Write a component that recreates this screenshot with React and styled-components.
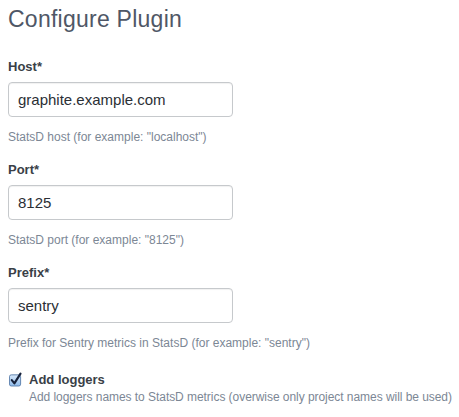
import React, { useState } from 'react';
import styled, { createGlobalStyle } from 'styled-components';

const GlobalStyle = createGlobalStyle`
  body {
    margin: 0;
    background: #ffffff;
    font-family: 'Liberation Sans', Arial, sans-serif;
  }
`;

const fields = [
  { id: 'host', label: 'Host*', value: 'graphite.example.com', help: 'StatsD host (for example: "localhost")' },
  { id: 'port', label: 'Port*', value: '8125', help: 'StatsD port (for example: "8125")' },
  { id: 'prefix', label: 'Prefix*', value: 'sentry', help: 'Prefix for Sentry metrics in StatsD (for example: "sentry")' },
];

const CheckIcon = () => (
  <svg width="14" height="15" viewBox="0 0 14 15">
    <defs>
      <linearGradient id="cb" x1="0" y1="0" x2="0" y2="1">
        <stop offset="0" stopColor="#d9e9fb" />
        <stop offset="1" stopColor="#8fbcec" />
      </linearGradient>
    </defs>
    <rect x="0.5" y="2.5" width="12" height="12" rx="2" fill="url(#cb)" stroke="#5a7dab" />
    <path d="M3 8.2 L5.8 11.6 L12.4 1.2" fill="none" stroke="#17223b" strokeWidth="2.3" strokeLinecap="round" strokeLinejoin="round" />
  </svg>
);

const App = () => {
  const [values, setValues] = useState(
    fields.reduce((acc, f) => ({ ...acc, [f.id]: f.value }), {})
  );
  const [addLoggers, setAddLoggers] = useState(true);

  const onChange = (e) => {
    setValues(prev => ({ ...prev, [e.target.id]: e.target.value }));
  };

  return (
    <Page>
      <GlobalStyle />
      <Title>Configure Plugin</Title>
      {fields.map(f => (
        <Field key={f.id}>
          <Label htmlFor={f.id}>{f.label}</Label>
          <Input id={f.id} value={values[f.id]} onChange={onChange} />
          <Help>{f.help}</Help>
        </Field>
      ))}
      <CheckRow onClick={() => setAddLoggers(v => !v)}>
        <CheckBox>{addLoggers ? <CheckIcon /> : null}</CheckBox>
        <CheckLabel>Add loggers</CheckLabel>
      </CheckRow>
      <CheckHelp>Add loggers names to StatsD metrics (overwise only project names will be used)</CheckHelp>
    </Page>
  );
};

const Page = styled.div`
  padding: 5px 8px 0;
`;

const Title = styled.h2`
  margin: 0 0 25px;
  font-size: 23px;
  line-height: 28px;
  font-weight: normal;
  letter-spacing: 0.25px;
  color: #4f5766;
`;

const Field = styled.div`
  margin-bottom: 15px;
`;

const Label = styled.label`
  display: block;
  margin-bottom: 6px;
  font-size: 13px;
  line-height: 18px;
  font-weight: bold;
  color: #3a3f47;
`;

const Input = styled.input`
  box-sizing: border-box;
  display: block;
  width: 225px;
  height: 35px;
  padding: 0 9px;
  border: 1px solid #c6c9cc;
  border-radius: 4px;
  box-shadow: inset 0 1px 1px rgba(0, 0, 0, 0.06);
  font-family: 'Liberation Sans', Arial, sans-serif;
  font-size: 15px;
  color: #2b2f35;
  outline: none;
`;

const Help = styled.p`
  margin: 11px 0 0;
  font-size: 12px;
  line-height: 18px;
  color: #7c8795;
`;

const CheckRow = styled.div`
  display: flex;
  align-items: center;
  margin-top: 19px;
  height: 18px;
  cursor: pointer;
`;

const CheckBox = styled.span`
  display: inline-flex;
  width: 13px;
  height: 15px;
  margin: -2px 7px 0 1px;
  border-radius: 2px;
`;

const CheckLabel = styled.span`
  font-size: 13px;
  line-height: 18px;
  font-weight: bold;
  color: #3a3f47;
`;

const CheckHelp = styled.p`
  margin: 0 0 0 21px;
  font-size: 12px;
  line-height: 17px;
  letter-spacing: -0.05px;
  white-space: nowrap;
  color: #7c8795;
`;

export default App;
